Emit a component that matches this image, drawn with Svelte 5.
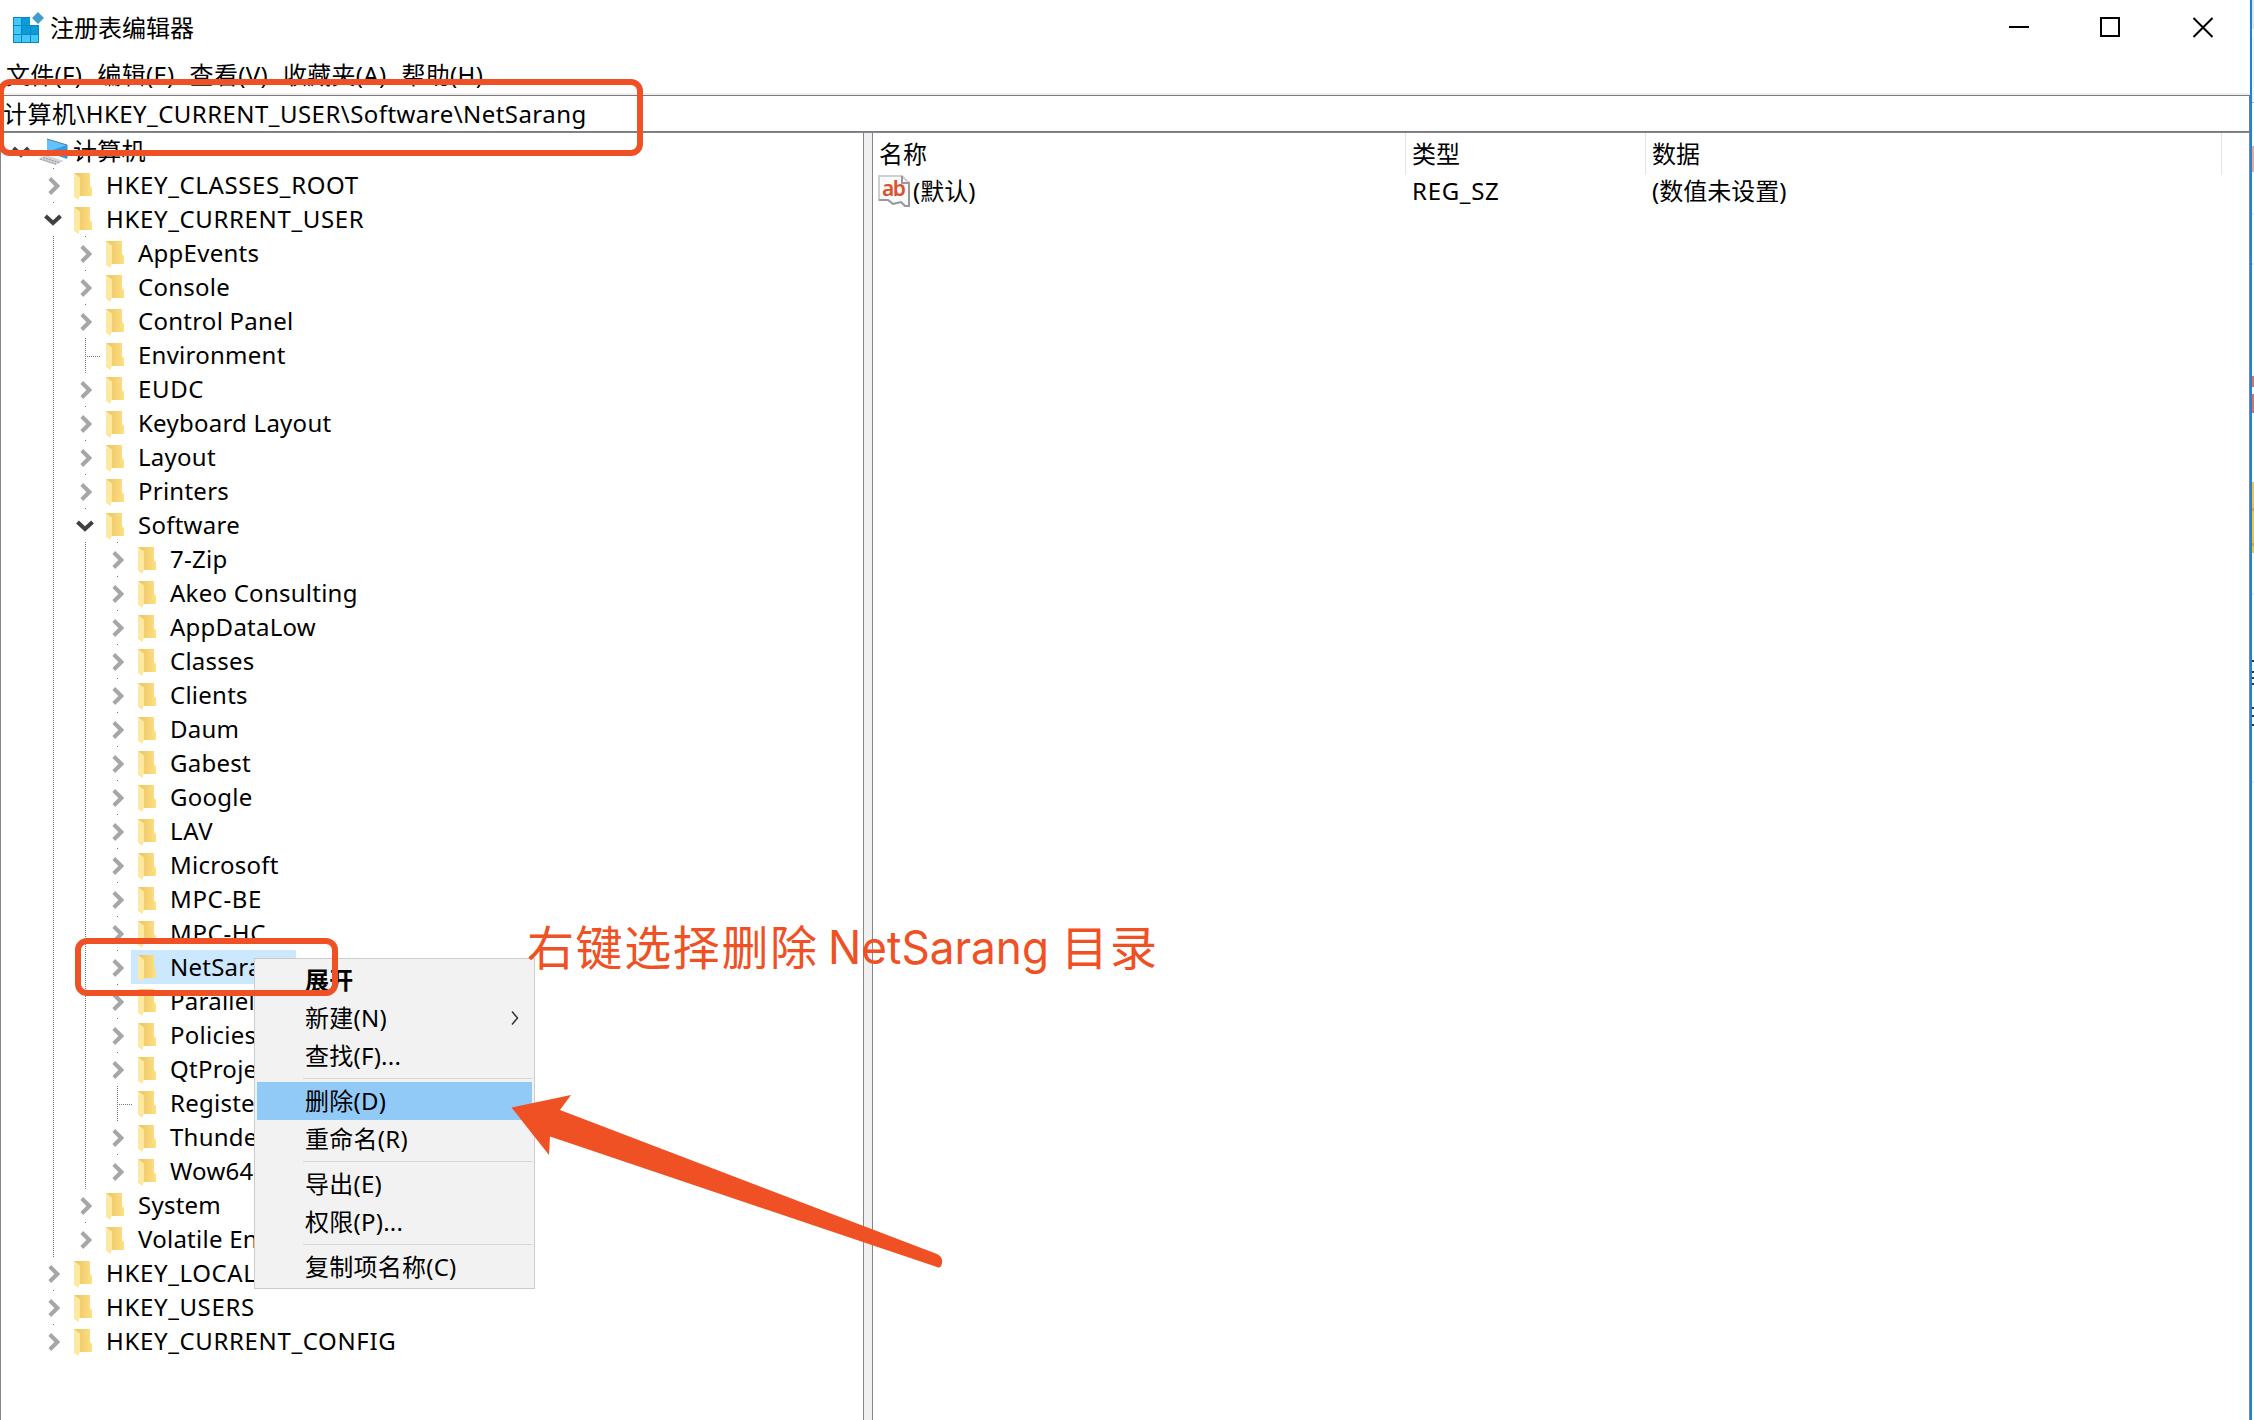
<script>
  const tree = [
    [0, '计算机', 'open'],
    [1, 'HKEY_CLASSES_ROOT'], [1, 'HKEY_CURRENT_USER', 'open'],
    [2, 'AppEvents'], [2, 'Console'], [2, 'Control Panel'], [2, 'Environment', 'leaf'],
    [2, 'EUDC'], [2, 'Keyboard Layout'], [2, 'Layout'], [2, 'Printers'], [2, 'Software', 'open'],
    [3, '7-Zip'], [3, 'Akeo Consulting'], [3, 'AppDataLow'], [3, 'Classes'], [3, 'Clients'],
    [3, 'Daum'], [3, 'Gabest'], [3, 'Google'], [3, 'LAV'], [3, 'Microsoft'], [3, 'MPC-BE'],
    [3, 'MPC-HC'], [3, 'NetSarang'], [3, 'Parallels'], [3, 'Policies'], [3, 'QtProje'],
    [3, 'Registe', 'leaf'], [3, 'Thunde'], [3, 'Wow64'],
    [2, 'System'], [2, 'Volatile En'],
    [1, 'HKEY_LOCAL'], [1, 'HKEY_USERS'], [1, 'HKEY_CURRENT_CONFIG']
  ];
  const rows = tree.map(([level, label, kind = 'closed']) => ({ level, label, kind }));
  const isCaps = (label) => /^[A-Z0-9_-]+$/.test(label);
  const menus = ['文件(F)', '编辑(E)', '查看(V)', '收藏夹(A)', '帮助(H)'];
  const groups = [
    [['展开', 'bold'], ['新建(N)', 'sub'], ['查找(F)...', '']],
    [['删除(D)', 'hot'], ['重命名(R)', '']],
    [['导出(E)', ''], ['权限(P)...', '']],
    [['复制项名称(C)', '']]
  ];
</script>

<div class="screen">
  <div class="window">
    <header>
      <svg class="app" width="34" height="36" viewBox="0 0 34 36">
        <path d="M1 5h17v8h9v18H1z" fill="#0a86c4" />
        <path d="M2 6h7v7H2zM2 14h7v8H2zM2 23h7v7H2zM10 23h8v7h-8zM19 23h7v7h-7z" fill="#44c8f8" />
        <path d="M10 6h8v7h-8zM10 14h8v8h-8zM19 14h7v8h-7z" fill="#0b9bdb" />
        <path d="M26 0l6 6-6 6-6-6z" fill="#3f9fcb" />
      </svg>
      <span class="title">注册表编辑器</span>
      <svg class="controls" width="206" height="24" viewBox="0 0 206 24" fill="none" stroke="#000" stroke-width="2">
        <path d="M0 12h20" /><rect x="92" y="3" width="18" height="18" /><path d="M184.500 3l19 19M203.500 3l-19 19" />
      </svg>
    </header>
    <nav>{#each menus as m}<span>{m}</span>{/each}</nav>
    <div class="address"><span>计算机</span>\HKEY_CURRENT_USER\Software\NetSarang</div>
    <main>
      <section class="tree">
        {#each rows as r}
          <div class="row {r.kind}" class:root={r.level === 0}>
            {#each Array(r.level) as _, i}
              <i class="guide" class:line={i > 0}></i>
            {/each}
            <span class="twist">
              {#if r.kind === 'open'}
                <svg class="down" width="18" height="12" viewBox="0 0 18 12"><path d="M1.500 2l7.500 7 7.500-7" fill="none" stroke="#404040" stroke-width="4" /></svg>
              {:else if r.kind === 'closed'}
                <svg width="12" height="18" viewBox="0 0 12 18"><path d="M1.800 1.500l7.500 7.500-7.500 7.500" fill="none" stroke="#a6a6a6" stroke-width="4" /></svg>
              {/if}
            </span>
            <span class="item" class:selected={r.label === 'NetSarang'}>
              {#if r.level === 0}
                <svg class="pc" width="31" height="30" viewBox="0 0 31 30">
                  <path d="M9 2l20 6v14L9 15z" fill="#2b9df0" /><path d="M9 2l20 6-20 7z" fill="#62c2ff" />
                  <path d="M9 2l20 6v13" fill="none" stroke="#5d7f97" />
                  <path d="M8 18l18 6-9 4L0 22z" fill="#d3d6d8" /><path d="M5 20.500l16 5M2 22l16 5" stroke="#8c9297" stroke-dasharray="2 1" />
                </svg>
              {:else}
                <svg class="folder" width="19" height="28" viewBox="0 0 19 28">
                  <path d="M0 1h16v13l2 2v8H5z" fill="url(#fold)" /><path d="M0 1l6 4.500v17L4.500 28 0 25z" fill="#ffe8a2" />
                </svg>
              {/if}
              <span class="label" class:caps={isCaps(r.label)}>{r.label}</span>
            </span>
          </div>
        {/each}
      </section>
      <div class="splitter"></div>
      <section class="values">
        <div class="cols head"><span>名称</span><span>类型</span><span>数据</span><span></span></div>
        <div class="cols">
          <span class="name">
            <svg width="32" height="32" viewBox="0 0 32 32">
              <path d="M1 1h23l7 7v23h-4l-4-4-8 2-5-4H1z" fill="#fafafa" stroke="#d0d0d0" stroke-width="2" />
              <path d="M24 1v7h7v23h-4l-4-4-8 2-5-4H1" fill="none" stroke="#999" stroke-width="2" />
              <text x="4" y="21" textLength="24">ab</text>
            </svg>(默认)</span>
          <span class="type">REG_SZ</span><span>(数值未设置)</span>
        </div>
      </section>
    </main>
  </div>
  <svg class="behind" width="2" height="1420" viewBox="0 0 2 1420">
    <path d="M0 0h2v29H0z" fill="#e4e4e4" /><path d="M0 37h2v66H0z" fill="#f3f3f3" />
    <path d="M0 102h2v1H0z" fill="#aaa" /><path d="M0 146h2v26H0z" fill="#f6a597" />
    <path d="M0 213h2v2H0zM0 263h2v2H0zM0 593h2v2H0zM0 781h2v2H0z" fill="#e6e6e6" />
    <path d="M0 376h2v11H0zM0 394h2v19H0z" fill="#ec6b5c" />
    <path d="M0 482h2v71H0z" fill="#fcc42c" /><path d="M0 508h2v3H0zM0 543h2v3H0z" fill="#f79a2d" />
    <path d="M0 660h2v2H0zM0 671h2v2H0zM0 677h2v2H0zM0 683h2v2H0zM0 707h2v2H0zM0 715h2v2H0zM0 724h2v2H0z" fill="#333" />
  </svg>

  <div class="menu">
    {#each groups as g}
      <div class="group">
        {#each g as [label, kind]}
          <div class="entry {kind}">{label}
            {#if kind === 'sub'}<svg width="8" height="14" viewBox="0 0 8 14"><path d="M1 .500l5.500 6.500L1 13.500" fill="none" stroke="#333" stroke-width="1.500" /></svg>{/if}
          </div>
        {/each}
      </div>
    {/each}
  </div>

  <svg class="notes" width="2254" height="1420" viewBox="0 0 2254 1420">
    <defs><linearGradient id="fold"><stop offset=".2" stop-color="#edc969" /><stop offset="1" stop-color="#ffe083" /></linearGradient></defs>
    <g fill="none" stroke="#ef5125" stroke-width="6">
      <rect x="1" y="82" width="639" height="71" rx="9" />
      <rect x="78" y="941" width="257" height="52" rx="9" />
    </g>
    <path d="M511.500 1107.500L571 1095l-11 15 377 144q6 3 5 9-1 6-5 4L550 1136.500l-1 18.500z" fill="#ef5125" />
    <text y="965"><tspan x="527" textLength="290">右键选择删除</tspan><tspan class="latin" x="828" y="964" textLength="221" lengthAdjust="spacingAndGlyphs">NetSarang</tspan><tspan x="1061" y="965" textLength="96">目录</tspan></text>
  </svg>
</div>

<style>
  :global(body) { overflow: hidden; }
  .screen { position: relative; display: flex; width: 2254px; height: 1420px; overflow: hidden; background: #fff; color: #000;
    font: 24px/34px "Noto Sans", "Noto Sans CJK SC", sans-serif; }
  .window { display: flex; flex-direction: column; width: 2250px; border-right: 2px solid #1a84d8; }
  .behind { background: #fafafa; flex: none; }
  header { display: flex; align-items: center; height: 56px; padding-left: 12px; box-sizing: border-box; }
  .app { margin-top: 4px; }
  .title { margin-left: 4px; flex: 1; }
  .controls { margin: 0 35px 2px 0; }
  nav { display: flex; gap: 15px; height: 37px; padding-left: 6px; line-height: 38px; letter-spacing: .3px; border-bottom: 2px solid #f0f0f0; }
  .address { height: 37px; padding-left: 3px; border: 1px solid #7a7a7a; border-left: 0; line-height: 36px; letter-spacing: .45px; box-sizing: border-box; }
  main { display: flex; flex: 1; min-height: 0; border-top: 1px solid #828790; }
  .tree { width: 862px; padding-top: 1px; border-left: 1px solid #828790; border-right: 1px solid #828790; overflow: hidden; }
  .splitter { width: 8px; background: #f0f0f0; }
  .row { display: flex; height: 34px; padding-left: 4px; }
  .guide { width: 32px; flex: none; }
  .line { background: repeating-linear-gradient(#777 0 1px, transparent 1px 2px) 16px 0 / 1px 100% no-repeat; }
  .twist { display: flex; align-items: center; justify-content: center; width: 33px; margin-right: -1px; flex: none; padding-top: 1px; box-sizing: border-box;
    background: linear-gradient(#777, #777) 16px 0 / 1px 1px no-repeat; }
  .down { margin: 1px 1px 0 0; }
  .root .twist { background: none; }
  .leaf .twist { background: repeating-linear-gradient(#777 0 1px, transparent 1px 2px) 16px 0 / 1px 100% no-repeat, repeating-linear-gradient(90deg, #777 0 1px, transparent 1px 2px) 16px 18px / 16px 1px no-repeat; }
  .item { display: flex; align-items: center; height: 34px; margin-left: -2px; padding: 0 4px 0 7px; white-space: nowrap; }
  .selected { background: #cce8ff; }
  .folder { margin-top: 2px; }
  .label { margin-left: 13px; letter-spacing: .25px; }
  .caps { letter-spacing: .64px; }
  .pc { margin: 2px 0 0 -4px; }
  .pc + .label { margin-left: 4px; letter-spacing: .2px; }
  .values { flex: 1; border-left: 1px solid #828790; border-right: 1px solid #828790; }
  .cols { display: grid; grid-template-columns: 533px 240px 576px 1fr; height: 36px; line-height: 36px; }
  .head { height: 40px; line-height: 42px; }
  .head span { border-right: 1px solid #e5e5e5; }
  .head span:last-child { border: 0; }
  .cols span { padding-left: 6px; }
  .cols .name { display: flex; align-items: center; height: 36px; padding-left: 5px; gap: 3px; }
  .cols .type { letter-spacing: .7px; }
  .name text { font: 600 21px "Noto Sans", sans-serif; fill: #d9532c; }
  .menu { position: absolute; left: 254px; top: 958px; width: 281px; height: 331px; border: 1px solid #ccc; background: #f2f2f2; padding: 3px 2px; box-sizing: border-box; }
  .group + .group { position: relative; margin-top: 7px; }
  .group + .group::before { content: ""; position: absolute; left: 46px; right: 0; top: -4px; height: 1px; background: #d7d7d7; }
  .group:first-child { margin-top: -1px; }
  .entry { display: flex; align-items: center; justify-content: space-between; height: 38px; padding: 0 13px 0 48px; letter-spacing: .25px; }
  .bold { font-weight: 700; }
  .hot { background: #91c9f7; }
  .notes { position: absolute; inset: 0; }
  .notes text { font: 47px Inter, "Noto Sans CJK SC", sans-serif; fill: #ef5125; }
  .notes .latin { font-size: 46px; }
</style>
